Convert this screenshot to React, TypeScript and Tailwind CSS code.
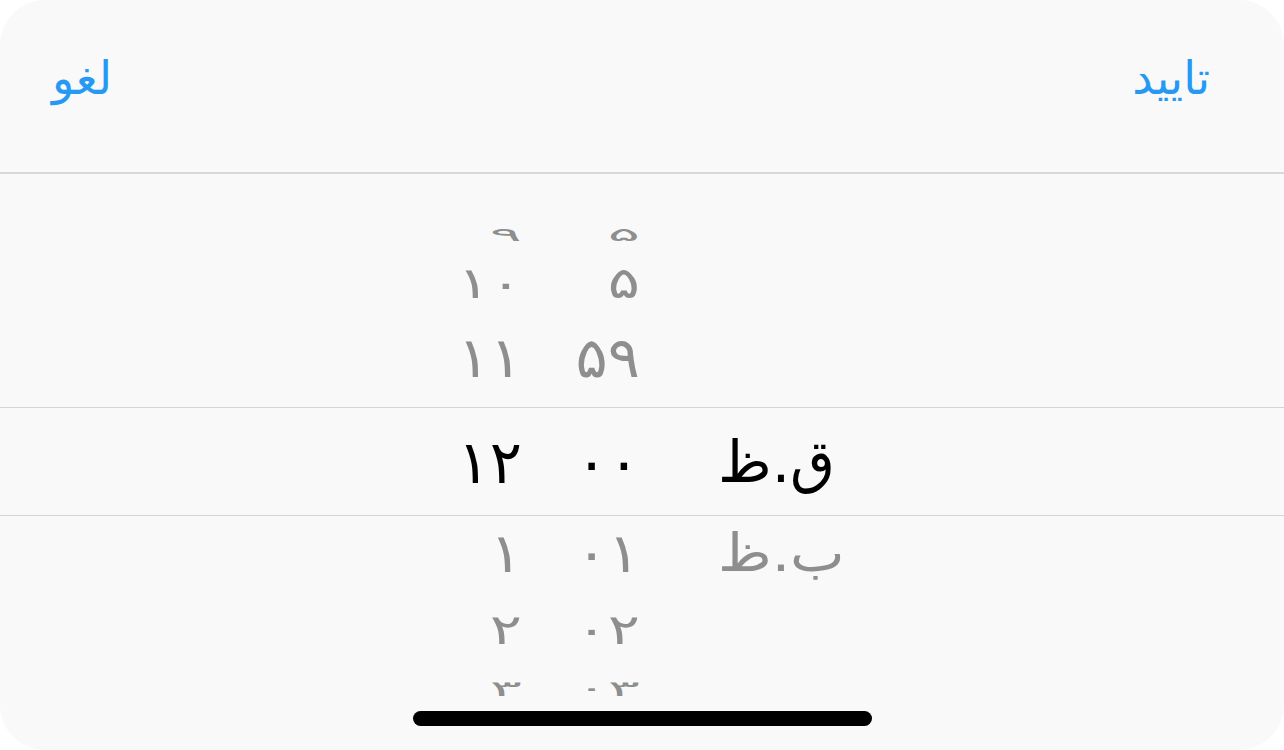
import React from 'react';

type Row = {
  hour: string;
  minute: string;
  period?: string;
  height: number;
  scale: number;
  shift: number;
  shade: string;
};

// wheel rows, from top to bottom; the selected one sits between the two lines
const rows: Row[] = [
  { hour: '۹', minute: '۵', height: 50, scale: 0.32, shift: -2, shade: 'text-[#8e8e8e]' },
  { hour: '۱۰', minute: '۵', height: 63, scale: 0.72, shift: -5, shade: 'text-[#8e8e8e]' },
  { hour: '۱۱', minute: '۵۹', height: 88, scale: 0.93, shift: -6, shade: 'text-[#8e8e8e]' },
  { hour: '۱۲', minute: '۰۰', period: 'ق.ظ', height: 109, scale: 1, shift: 0, shade: 'text-black' },
  { hour: '۱', minute: '۰۱', period: 'ب.ظ', height: 74, scale: 0.9, shift: 0, shade: 'text-[#8e8e8e]' },
  { hour: '۲', minute: '۰۲', height: 66, scale: 0.7, shift: 6, shade: 'text-[#8e8e8e]' },
  { hour: '۳', minute: '۰۳', height: 56, scale: 0.36, shift: 2, shade: 'text-[#8e8e8e]' },
];

function WheelRow({ row, selected }: { row: Row; selected: boolean }) {
  const t = { transform: `translateY(${row.shift}px) scaleY(${row.scale})` };
  return (
    <div
      className={`grid grid-cols-[522px_118px_1fr] items-center text-[60px] leading-none ${row.shade} ${
        selected ? 'border-y border-[#d4d4d4]' : ''
      }`}
      style={{ height: row.height }}
    >
      <span className="text-right" style={t}>
        {row.hour}
      </span>
      <span className="text-right" style={t}>
        {row.minute}
      </span>
      <span className="pl-[78px] text-[58px]" style={t}>
        {row.period && <span dir="rtl">{row.period}</span>}
      </span>
    </div>
  );
}

export default function App() {
  return (
    <div className="w-[1284px] h-[750px] bg-white overflow-hidden" style={{ fontFamily: '"DejaVu Sans", sans-serif' }}>
      <div className="relative h-full bg-[#f9f9f9] rounded-[45px] overflow-hidden flex flex-col">
        <div className="h-[174px] flex items-center justify-between pl-[52px] pr-[74px] pb-[16px] text-[#2599f3] text-[46px] border-b-2 border-[#d9d9d9] shrink-0">
          <button className="leading-none">لغو</button>
          <button className="leading-none">تایید</button>
        </div>
        <div className="pt-[32px] flex flex-col">
          {rows.map((r, i) => (
            <WheelRow key={i} row={r} selected={i === 3} />
          ))}
        </div>
        <div className="absolute left-[413px] top-[711px] w-[459px] h-[15px] rounded-full bg-black" />
      </div>
    </div>
  );
}
